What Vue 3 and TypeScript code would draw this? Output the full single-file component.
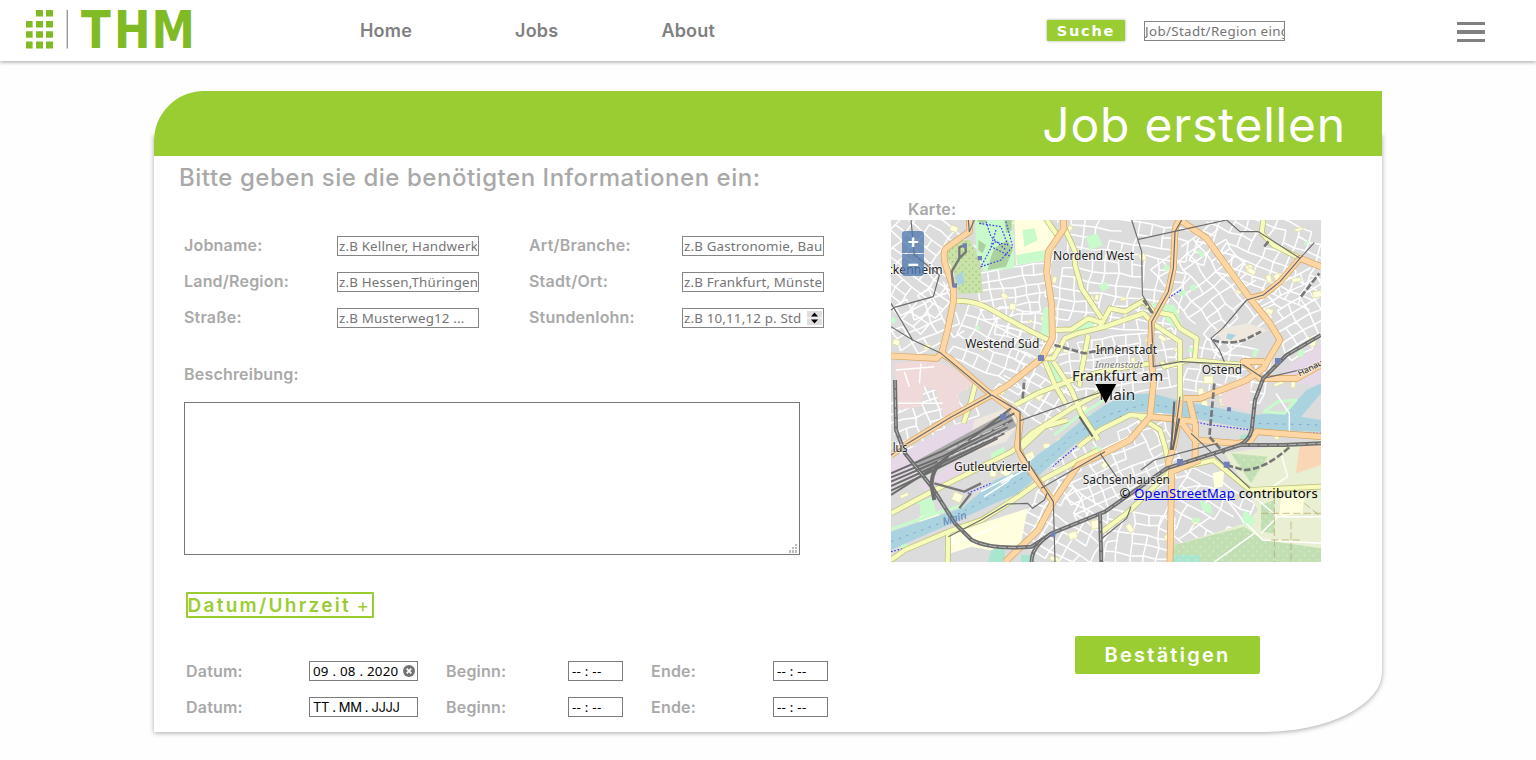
<script setup lang="ts">
import { ref } from 'vue'

interface Field {
  label: string
  placeholder: string
  numeric?: boolean
}

interface Zone {
  x: number
  y: number
  w: number
  h: number
  angle: number
  step: number
}

const navigation = ['Home', 'Jobs', 'About']

const fields: Field[] = [
  { label: 'Jobname:', placeholder: 'z.B Kellner, Handwerker' },
  { label: 'Art/Branche:', placeholder: 'z.B Gastronomie, Baugewerbe' },
  { label: 'Land/Region:', placeholder: 'z.B Hessen,Thüringen...' },
  { label: 'Stadt/Ort:', placeholder: 'z.B Frankfurt, Münster' },
  { label: 'Straße:', placeholder: 'z.B Musterweg12 ...' },
  { label: 'Stundenlohn:', placeholder: 'z.B 10,11,12 p. Std', numeric: true },
]

const dates = ref([
  { value: '09 . 08 . 2020', filled: true },
  { value: 'TT . MM . JJJJ', filled: false },
])

// Side streets: one loose lattice per district.
let seed = 71
function random(): number {
  seed = (seed * 16807) % 2147483647
  return seed / 2147483647
}

function lattice(z: Zone): string {
  const cols = Math.ceil(z.w / z.step)
  const rows = Math.ceil((z.h / z.step) * 1.25)
  const a = (z.angle * Math.PI) / 180
  const pts: string[][] = []
  for (let r = 0; r <= rows; r++) {
    const line: string[] = []
    for (let c = 0; c <= cols; c++) {
      const u = c * z.step - z.w / 2 + (random() - 0.5) * z.step * 0.3
      const v = r * z.step * 0.8 - z.h / 2 + (random() - 0.5) * z.step * 0.25
      const x = z.x + z.w / 2 + u * Math.cos(a) - v * Math.sin(a)
      const y = z.y + z.h / 2 + u * Math.sin(a) + v * Math.cos(a)
      line.push(`${x.toFixed(0)} ${y.toFixed(0)}`)
    }
    pts.push(line)
  }
  let d = ''
  for (let r = 0; r <= rows; r++) {
    for (let c = 0; c <= cols; c++) {
      if (c < cols && random() > 0.14) d += `M${pts[r][c]}L${pts[r][c + 1]}`
      if (r < rows && random() > 0.2) d += `M${pts[r][c]}L${pts[r + 1][c]}`
    }
  }
  return d
}

const zones: Zone[] = [
  { x: -40, y: -20, w: 230, h: 290, angle: 38, step: 38 },
  { x: 0, y: 230, w: 170, h: 160, angle: -25, step: 40 },
  { x: 200, y: 290, w: 220, h: 150, angle: 24, step: 42 },
  { x: 265, y: 145, w: 205, h: 140, angle: -9, step: 35 },
  { x: 320, y: 275, w: 160, h: 80, angle: 10, step: 36 },
  { x: 480, y: 0, w: 370, h: 310, angle: 8, step: 40 },
  { x: 860, y: 50, w: 210, h: 320, angle: -38, step: 38 },
  { x: 930, y: -20, w: 360, h: 190, angle: 22, step: 39 },
  { x: 1130, y: 180, w: 180, h: 190, angle: -30, step: 38 },
  { x: 500, y: 350, w: 360, h: 160, angle: -8, step: 36 },
  { x: 330, y: 440, w: 210, h: 140, angle: 33, step: 36 },
  { x: 0, y: 520, w: 220, h: 130, angle: -18, step: 36 },
  { x: 890, y: 370, w: 230, h: 140, angle: 12, step: 40 },
  { x: 500, y: 650, w: 330, h: 180, angle: -24, step: 36 },
  { x: 400, y: 810, w: 240, h: 220, angle: 32, step: 40 },
  { x: 645, y: 880, w: 180, h: 160, angle: 8, step: 39 },
  { x: 845, y: 780, w: 210, h: 190, angle: 30, step: 44 },
]
const streets = zones.map(lattice)

const plots = Array.from({ length: 110 }, () => ({
  x: Math.round(random() * 1280),
  y: Math.round(random() * 1010),
  w: Math.round(9 + random() * 20),
  h: Math.round(8 + random() * 18),
  turn: Math.round(random() * 80 - 40),
  kind: random() > 0.25 ? 'school' : 'lawn',
}))

const woods = 'M850 975L1060 920L1115 960L1290 985V1026H837ZM1020 700L1130 710L1080 790ZM1110 855L1150 840V940L1110 935Z'
const forest = 'M165 100L190 60L240 60L268 130L275 218L205 222L188 160Z'

const areas = [
  { kind: 'forest', d: forest },
  { kind: 'park', d: 'M252 0H365L370 145L278 153L255 80Z' },
  { kind: 'pale', d: 'M370 0H455L505 55L474 120L375 135Z' },
  { kind: 'park', d: 'M395 30L430 25L440 60L400 80ZM375 105L462 90L467 120L378 135ZM585 50L620 40L635 75L596 90Z' },
  { kind: 'park', d: 'M458 265L478 260L480 345L448 350ZM540 325L600 300L610 325L550 345ZM455 425L487 430L515 480L492 500ZM780 250L850 255L880 330L845 320Z' },
  { kind: 'pink', d: 'M10 428L135 420L260 485L190 530L100 500L90 560L15 570ZM995 490L1080 485L1075 575L990 552Z' },
  { kind: 'pink', d: 'M155 505L205 530L205 575L165 600L135 520Z' },
  { kind: 'industry', d: 'M0 720L170 620L350 570L380 610L350 650L0 800ZM80 800L200 720L240 760L125 820Z' },
  { kind: 'industry', d: 'M1150 475L1290 370V500L1180 480ZM1047 690L1120 680L1117 705L1000 725Z' },
  { kind: 'stone', d: 'M250 600L370 555L380 615L345 665L230 700ZM970 330L1070 310L1130 330L1080 360L1000 370Z' },
  { kind: 'park', d: 'M85 845L125 830L135 880L90 900ZM300 700L340 680L345 710L300 725Z' },
  { kind: 'pale', d: 'M180 940L410 865L390 970L320 995L240 980L180 1000ZM85 890L145 875L145 905L85 920Z' },
  { kind: 'meadow', d: 'M1000 700L1290 660V1026H880L850 975L1065 910L1100 870L1065 800Z' },
  { kind: 'wood', d: woods },
  { kind: 'field', d: 'M1225 680L1290 665V735L1215 760Z' },
  { kind: 'pale', d: 'M1170 830L1240 820L1235 880L1165 890ZM965 760L1000 750L995 800L970 805Z' },
  { kind: 'park', d: 'M1060 870L1095 900L1075 925L1050 905ZM925 840L960 855L965 885L935 870Z' },
  { kind: 'sport', d: 'M300 990L342 980L340 1026H292ZM1050 645L1095 640L1085 670L1045 672ZM838 1005H925V1026H840ZM390 1005H430V1026H390Z' },
]

const secondary = [
  'M197 243Q250 238 312 275T482 365',
  'M492 330L542 328L592 295L637 310',
  'M467 0L502 50M517 15L552 95L552 135L572 205L632 295',
  'M452 415H487L522 355L560 340L642 320L757 280L792 315L867 365V540',
  'M627 320L657 265L702 275L757 243L787 275L842 285L867 325L917 355L912 415',
  'M812 425L820 440L897 420L1057 435',
  'M1117 0L1112 40L1147 75L1227 115',
  'M0 880L132 810L362 695L422 640L542 565L642 510',
  'M462 425L492 495L527 555M487 425L542 510L570 580L622 660',
  'M0 1020L42 990L172 935L272 900L382 830L452 780L622 690',
  'M592 345L572 450L565 500M372 555L440 520L542 480L650 450L780 430',
  'M562 680L627 630L717 585L777 590M737 585L807 630L822 680L832 730',
  'M627 940L707 880L842 750L967 720L1077 810L1290 800',
  'M172 935L170 1026M217 610L240 545L255 485M385 690L460 620L530 600',
]

const primary = [
  'M235 0V35L165 85Q155 95 162 130L187 205V245L170 330L152 400L175 415L290 515L372 575Q392 590 387 610L379 680L402 730L487 845L442 930L342 1026',
  'M0 408L137 415L152 400',
  'M517 0L519 25L472 95L467 155L482 255L484 355L452 415L352 495L302 525L182 590L42 675L0 705',
  'M872 0Q855 5 852 35L847 145L832 215L782 305L779 365L787 495L777 590L717 660L627 705L562 735L487 845',
  'M867 0L947 55L997 125L1077 235L1137 310L1167 360L1117 445L1067 480L927 535H877',
  'M1290 140L1227 115L1167 185L1117 225L1077 235',
  'M777 590L857 598L912 605M867 540L862 600L847 680L832 730L842 755L837 1026M895 540L914 620L912 715',
  'M867 602L912 660L1037 670L1077 665L1097 635L1290 650M842 755L927 720',
  'M1290 435L1217 475H1107L1057 425L1120 425',
]

const trams = [
  'M722 0L752 95L754 225L787 280M742 58L1007 0L1047 35H1102L1227 115L1270 68M1227 115L1167 185L1117 225L1067 240L995 325L960 355L985 390L1000 425',
  'M60 0L70 105L145 165L127 230L10 262L0 270M0 320L65 360L150 400L300 525M0 250L30 300L65 360',
  'M872 0L852 35L847 145L832 215L782 305L787 440L870 425L1057 435L1117 475L1290 435',
  'M250 0L235 35L232 0M302 525L387 575V690L487 845L492 1026M387 602L560 540L650 510',
  'M450 805L642 695M172 950L270 900L350 852L410 850L425 865L460 840L468 820',
  'M627 700L690 790M750 750L790 720L920 685L980 670M847 680L867 530M1077 805L900 640',
  'M302 525L182 590L42 675L0 705M627 960L707 895L720 860',
]

const rail = 'M12 480L15 630L42 700L122 800L192 910L242 960Q300 990 422 980L482 940L642 875L827 745L1047 675Q1075 660 1082 630L1092 540L1117 475L1187 405L1290 345'
const yards = [
  'M0 760L150 695L370 580', 'M0 772L160 707L365 600', 'M0 785L150 720L350 622',
  'M0 798L140 735L340 640', 'M0 812L130 750L320 655', 'M0 825L110 755L360 565',
]
</script>

<template>
  <div class="page">
    <header class="topbar">
      <svg class="logo" width="170" height="40" viewBox="25 9 170 40" aria-label="THM">
        <path class="logo-mark" d="M36 10h7v6.6h-7zM46 10h7v6.6h-7zM26 21h6.6v6.6H26zM36 21h7v6.6h-7zM46 21h7v6.6h-7zM26 31.3h6.6v6.5H26zM36 31.3h7v6.5h-7zM46 31.3h7v6.5h-7zM26 41.4h6.6v7H26zM36 41.4h7v7h-7zM46 41.4h7v7h-7z" />
        <path class="logo-rule" d="M67.3 10v38.5" />
        <text class="logo-text" transform="scale(.84 1)" x="96.4 135.6 180.4" y="48.3">THM</text>
      </svg>
      <nav class="nav">
        <a v-for="item in navigation" :key="item">{{ item }}</a>
      </nav>
      <div class="search">
        <button class="search-button" type="button">Suche</button>
        <input class="search-input" placeholder="Job/Stadt/Region eingeben" />
      </div>
      <div class="burger"><i></i><i></i><i></i></div>
    </header>

    <main class="card">
      <h1 class="card-title">Job erstellen</h1>
      <div class="card-body">
        <section class="form">
          <h2>Bitte geben sie die benötigten Informationen ein:</h2>
          <div class="fields">
            <template v-for="field in fields" :key="field.label">
              <label>{{ field.label }}</label>
              <div class="control">
                <input :placeholder="field.placeholder" />
                <svg v-if="field.numeric" class="spinner" width="15" height="14" viewBox="0 0 15 14">
                  <rect width="15" height="14" fill="#dedede" />
                  <path d="M0 7h15" stroke="#fff" />
                  <path d="M7.5 1.5L11 5.5H4zM7.5 12.5L11 8.5H4z" />
                </svg>
              </div>
            </template>
          </div>
          <label class="description-label">Beschreibung:</label>
          <div class="description">
            <textarea></textarea>
            <svg class="grip" width="10" height="10" viewBox="0 0 10 10">
              <path d="M7 0h2v2H7zM4 3h2v2H4zM7 3h2v2H7zM1 6h2v3H1zM4 6h2v3H4zM7 6h2v3H7z" />
            </svg>
          </div>
          <button class="add-date" type="button">Datum/Uhrzeit <span>+</span></button>
          <div class="dates">
            <template v-for="date in dates" :key="date.value">
              <label>Datum:</label>
              <div class="box date-box">
                <span :class="{ hint: !date.filled }">{{ date.value }}</span>
                <svg v-if="date.filled" width="12" height="12" viewBox="0 0 12 12">
                  <circle cx="6" cy="6" r="6" fill="#737373" />
                  <path d="M3.7 3.7l4.6 4.6M8.3 3.7L3.7 8.3" stroke="#fff" stroke-width="1.7" />
                </svg>
              </div>
              <label>Beginn:</label>
              <div class="box">-- : --</div>
              <label>Ende:</label>
              <div class="box">-- : --</div>
            </template>
          </div>
        </section>

        <section class="side">
          <label class="map-label">Karte:</label>
          <div class="map">
            <svg class="map-canvas" width="430" height="342" viewBox="0 0 1290 1026">
              <defs>
                <pattern id="trees" width="20" height="20" patternUnits="userSpaceOnUse">
                  <circle cx="5" cy="5" r="1.8" fill="#7fae6a" />
                  <circle cx="15" cy="15" r="1.8" fill="#7fae6a" />
                </pattern>
                <pattern id="grove" width="26" height="26" patternUnits="userSpaceOnUse">
                  <circle cx="6" cy="6" r="2.2" fill="#e4f3dc" />
                  <circle cx="19" cy="19" r="2.2" fill="#e4f3dc" />
                </pattern>
              </defs>
              <rect width="1290" height="1026" fill="#dcdcdc" />
              <path v-for="(d, i) in streets" :key="'s' + i" :d="d" class="street" />
              <rect
                v-for="(p, i) in plots" :key="'p' + i" :class="p.kind" :x="p.x" :y="p.y" :width="p.w" :height="p.h"
                :transform="`rotate(${p.turn} ${p.x} ${p.y})`"
              />
              <path v-for="(a, i) in areas" :key="'a' + i" :d="a.d" :class="a.kind" />
              <path :d="forest" fill="url(#trees)" />
              <path :d="woods" fill="url(#grove)" />
              <path class="copse" d="M262 60L285 75L275 100L262 90ZM310 85L350 60L365 90L345 140L290 150L300 110ZM340 0H362V30L345 40ZM258 0H290L270 15Z" />
              <path class="street" d="M15 450L130 440M40 455L55 500M90 430L85 490M15 550H155M100 500L120 545M1065 810L1160 890L1290 890M1065 910L1115 960L1290 970M1090 940L970 1026M1160 890L1110 940M1170 700L1190 770L1130 810M845 820Q950 770 1000 830T1060 910M200 870L185 970L320 920M960 890L860 960" />
              <path class="track" d="M1150 830V1026M1200 905V1026M1110 880H1290M1140 960H1230M1240 850L1290 890" />
              <path class="footway" d="M265 10L330 20L350 75L310 65L270 140L330 120L365 80L345 5M315 30L300 80L360 110M285 5L300 50L345 90M230 820L300 790M870 210L830 235" />
              <path class="river" d="M0 935L132 890L212 865L312 780L382 755L432 710L502 660L562 610L642 555L707 525L782 520L857 540L987 565L1087 585L1187 575L1247 510L1290 490V520L1230 590L1290 600V635L1097 630L957 605L827 580L727 575L627 620L542 680L462 750L382 820L312 850L182 910L0 990Z" />
              <path class="bank" d="M0 928L135 880L220 855M1120 575L1160 545L1215 540L1180 580ZM490 645L560 590L640 540" />
              <path class="street" d="M270 815L365 765L350 785L280 830M1155 520L1195 580V640M330 790L400 750" />
              <path class="ferry" d="M0 965L160 905L320 820L450 740L540 650L650 585L770 550L960 585L1100 610L1290 615" />
              <path class="footway" d="M0 995L60 980M485 740L590 650L690 590M800 585L960 615L1120 635L1290 640" />
              <path class="river" d="M195 165L215 155L220 190L195 195ZM1010 340L1035 345L1020 360L1005 355Z" />

              <path v-for="(d, i) in secondary" :key="'yc' + i" :d="d" class="secondary-edge" />
              <path v-for="(d, i) in secondary" :key="'y' + i" :d="d" class="secondary" />
              <path v-for="(d, i) in primary" :key="'oc' + i" :d="d" class="primary-edge" />
              <path v-for="(d, i) in primary" :key="'o' + i" :d="d" class="primary" />
              <path v-for="(d, i) in trams" :key="'t' + i" :d="d" class="tram" />

              <path class="yard" d="M80 750L365 595" />
              <path v-for="(d, i) in yards" :key="'r' + i" :d="d" class="yard-track" />
              <path class="yard-gaps" d="M170 690L350 610M190 702L350 630M140 725L330 642" />
              <path class="rail" :d="rail" />
              <path class="rail-inner" :d="rail" />
              <path class="rail" d="M1047 675L1180 675L1290 670M422 1026Q420 980 482 940M627 880L631 1026M122 800Q120 740 170 715M122 800L130 840" />
              <path class="rail-inner" d="M1047 675L1180 675L1290 670M422 1026Q420 980 482 940M627 880L631 1026" />
              <path class="tunnel" d="M1007 735L1057 750Q1120 750 1197 680M970 490L955 650L1000 700M490 375L580 400L680 380M965 360Q1010 375 1060 360L1110 335M395 535L400 480M757 240L785 280M1120 80L1135 60M1230 230L1285 160" />
              <path class="siding" d="M187 200L182 155L205 115L205 82L222 75L225 95L205 115M240 820L205 865M130 790L220 815L270 790" />
              <path class="bridge" d="M565 590L605 650M850 545L840 690M865 595L845 690" />
              <path class="stop" d="M215 70h13v13h-13zM260 108h13v13h-13zM185 190h13v13h-13zM441 405h18v18h-18zM328 582h18v18h-18zM858 717h18v18h-18zM998 725h18v18h-18zM1152 414h18v18h-18zM1008 562h12v12h-12zM480 937h13v13h-13z" />

              <g class="names">
                <text x="486" y="120" textLength="243" lengthAdjust="spacingAndGlyphs">Nordend West</text>
                <text x="-12" y="162" textLength="167" lengthAdjust="spacingAndGlyphs">ckenheim</text>
                <text x="223" y="384" textLength="222" lengthAdjust="spacingAndGlyphs">Westend Süd</text>
                <text x="614" y="402" textLength="184" lengthAdjust="spacingAndGlyphs">Innenstadt</text>
                <text class="italic" x="612" y="443" textLength="143" lengthAdjust="spacingAndGlyphs">Innenstadt</text>
                <text x="932" y="462" textLength="121" lengthAdjust="spacingAndGlyphs">Ostend</text>
                <text class="city" x="543" y="482" textLength="274" lengthAdjust="spacingAndGlyphs">Frankfurt am</text>
                <text class="city" x="625" y="540" textLength="108" lengthAdjust="spacingAndGlyphs">Main</text>
                <text x="5" y="696" textLength="45" lengthAdjust="spacingAndGlyphs">lus</text>
                <text x="189" y="752" textLength="230" lengthAdjust="spacingAndGlyphs">Gutleutviertel</text>
                <text x="575" y="791" textLength="262" lengthAdjust="spacingAndGlyphs">Sachsenhausen</text>
                <text class="water-name" x="158" y="917" transform="rotate(-17 158 917)">Main</text>
                <text class="road-name" x="1226" y="470" transform="rotate(-27 1226 470)">Hanauer</text>
              </g>
              <path d="M613 492H676L644 550Z" />
            </svg>
            <div class="zoom"><button type="button">+</button><button type="button">−</button></div>
            <p class="credit">© <a>OpenStreetMap</a> contributors</p>
          </div>
          <button class="submit" type="button">Bestätigen</button>
        </section>
      </div>
    </main>
  </div>
</template>

<style>
body {
  margin: 0;
  background: #fefefe;
}
</style>

<style scoped>
.page {
  height: 760px;
  overflow: hidden;
  font-family: Inter, 'Noto Sans', sans-serif;
  color: #a9a9a9;
  background: #fefefe;
}
* { box-sizing: border-box; }
button, input, textarea { font-family: inherit; margin: 0; border-radius: 0; }
label { font-size: 16px; font-weight: 600; line-height: 21px; letter-spacing: .2px; white-space: nowrap; }

.topbar {
  height: 61px;
  display: grid;
  grid-template-columns: 335px 687px 409px 1fr;
  padding-left: 25px;
  background: #fff;
  box-shadow: 0 1px 4px rgba(0, 0, 0, .38);
}
.logo { display: block; margin-top: 9px; overflow: visible; }
.logo-mark, .logo-text { fill: #80ba24; }
.logo-text { font: bold 52px 'DejaVu Sans', sans-serif; }
.logo-rule { stroke: #999; stroke-width: 1.4; }
.nav { display: flex; gap: 103px; color: gray; font-size: 18px; font-weight: 600; line-height: 61px; letter-spacing: .2px; }
.search { display: flex; align-items: flex-start; gap: 19px; padding-top: 20px; }
.search-button {
  width: 78px; height: 21px; padding: 0; border: 0; border-radius: 1px;
  color: #fff; background: #9acd32; font: bold 14.5px/22px 'DejaVu Sans', sans-serif; letter-spacing: 1.8px;
  box-shadow: 0 0 3px rgba(0, 0, 0, .35);
}
input {
  width: 142px; height: 20px; padding: 0 1px 1px; border: 1px solid #858585; background: #fff;
  font-family: 'Noto Sans', sans-serif; font-size: 13.33px; letter-spacing: .18px; line-height: 17px; outline: 0;
}
input::placeholder { color: #757575; opacity: 1; }
.search-input { width: 141px; margin-top: 1px; padding: 0; letter-spacing: .35px; }
.burger { display: flex; flex-direction: column; gap: 5px; margin: 22px 0 0 1px; }
.burger i { width: 28px; height: 3.4px; background: gray; }

.card {
  width: 1228px;
  height: 598px;
  margin: 73px auto 0;
  background: #fff;
  border-radius: 0 0 120px 0 / 0 0 60px 0;
  box-shadow: 0 1px 5px rgba(0, 0, 0, .35);
  display: flow-root;
}
.card-title {
  position: relative;
  height: 65px;
  margin: -43px 0 0;
  padding-right: 36px;
  border-radius: 50px 0 0 0;
  background: #9acd32;
  color: #fff;
  font-size: 48px;
  font-weight: 400;
  line-height: 68px;
  letter-spacing: .8px;
  text-align: right;
}
.card-body { display: grid; grid-template-columns: 737px 430px; }
.form { padding-left: 30px; }
h2 { margin: 6px 0 0 -5px; height: 30px; font-size: 24px; font-weight: 500; line-height: 31px; letter-spacing: .53px; white-space: nowrap; }
.fields {
  display: grid; grid-template-columns: 153px 192px 153px 142px; grid-auto-rows: 20px;
  row-gap: 16px; margin-top: 44px;
}
.fields label { line-height: 19px; }
.control { position: relative; height: 20px; width: 142px; }
.control input { display: block; }
.spinner { position: absolute; top: 3px; right: 2px; }
.description-label { display: block; margin: 36px 0 18px; height: 19px; }
.description { position: relative; width: 616px; height: 153px; margin-top: 19px; }
textarea { display: block; width: 100%; height: 100%; border: 1px solid #777; background: #fff; resize: none; outline: 0; }
.grip { position: absolute; right: 2px; bottom: 1px; fill: #bdbdbd; }
.add-date {
  display: block; width: 188px; height: 26px; margin: 37px 0 0 1.5px; padding: 0;
  border: 2px solid #9acd32; border-radius: 1px; background: #fff; color: #9acd32;
  font-size: 19px; font-weight: 600; line-height: 23px; letter-spacing: 2.28px; text-align: left; white-space: nowrap;
}
.add-date span { margin-left: -1.5px; font-weight: 400; }
.dates {
  display: grid; grid-template-columns: 123px 137px 122px 83px 122px 55px; grid-auto-rows: 20px;
  row-gap: 16px; margin: 43px 0 0 2px;
}
.box {
  width: 55px; height: 20px; padding: 0 3px; border: 1px solid #7c7c7c; background: #fff; color: #000;
  font: 13.33px/18px 'Noto Sans', sans-serif; letter-spacing: .25px; white-space: pre;
}
.date-box { display: flex; align-items: center; justify-content: space-between; width: 109px; padding: 0 2px 0 3px; }
.hint { font-family: Inter, sans-serif; font-size: 13px; letter-spacing: -.4px; }

.side { padding-top: 42px; }
.map-label { display: block; margin-left: 17px; height: 22px; line-height: 22px; }
.map { position: relative; width: 430px; height: 342px; overflow: hidden; }
.map-canvas { display: block; }
.zoom { position: absolute; left: 11px; top: 11px; display: grid; gap: 1px; }
.zoom button {
  width: 22px; height: 22px; padding: 0; border: 0; background: rgba(80, 121, 174, .78); color: #fff;
  font: bold 19px/20px 'Liberation Sans', sans-serif;
}
.zoom button:first-child { border-radius: 3px 3px 0 0; }
.zoom button:last-child { border-radius: 0 0 3px 3px; }
.credit {
  position: absolute; right: 3px; top: 264px; margin: 0; color: #000;
  font: 13px/18px 'Noto Sans', sans-serif; letter-spacing: .3px; white-space: nowrap;
}
.credit a { color: #0000ee; text-decoration: underline; }
.submit {
  display: block; width: 185px; height: 38px; margin: 74px 0 0 184px; padding: 0; border: 0; border-radius: 2px;
  background: #9acd32; color: #fff; font-size: 20px; font-weight: 600; line-height: 38px; letter-spacing: 2.25px;
}

.map-canvas path { stroke-linejoin: round; }
.street, .track, .footway, .ferry, .secondary, .secondary-edge, .primary, .primary-edge, .tram, .yard, .yard-track,
.yard-gaps, .rail, .rail-inner, .tunnel, .siding, .bridge { fill: none; }
.street { stroke: #fff; stroke-width: 4.5; }
.track { stroke: #b59f5c; stroke-width: 2; stroke-dasharray: 22 10; }
.footway { stroke: #3535ee; stroke-width: 3.5; stroke-dasharray: 5 5; }
.ferry { stroke: #7d9fce; stroke-width: 2.5; stroke-dasharray: 8 16; }
.school, .pale { fill: #ffffe0; }
.school { stroke: #dfdc9b; stroke-width: 2; }
.lawn, .park { fill: #c8facc; }
.forest { fill: #c9e2a8; }
.copse { fill: #add19e; }
.wood { fill: #c2dfb4; }
.pink { fill: #f0d9d9; }
.industry { fill: #e7d8e7; }
.stone { fill: #eee8df; }
.meadow { fill: #e9efd2; }
.field { fill: #f8d6b6; }
.sport { fill: #a8e6cf; }
.river { fill: #aad3df; }
.bank { fill: none; stroke: #c8facc; stroke-width: 9; }
.secondary-edge { stroke: #b9ba72; stroke-width: 17; }
.secondary { stroke: #f6fabb; stroke-width: 13; }
.primary-edge { stroke: #d7a45c; stroke-width: 20; }
.primary { stroke: #fcd6a4; stroke-width: 16; }
.tram { stroke: #6b6b6b; stroke-width: 3.5; }
.yard { stroke: #aaa; stroke-width: 52; }
.yard-track { stroke: #6c6c6c; stroke-width: 6; }
.yard-gaps { stroke: #ddd; stroke-width: 3; stroke-dasharray: 30 8; }
.rail { stroke: #6d6d6d; stroke-width: 12; }
.rail-inner { stroke: #c8c8c8; stroke-width: 2.5; stroke-dasharray: 24 5; }
.tunnel { stroke: #777; stroke-width: 8; stroke-dasharray: 20 7; }
.siding { stroke: #777; stroke-width: 7; }
.bridge { stroke: #666; stroke-width: 6; }
.stop { fill: #7181b5; }
.names { font-family: 'Noto Sans', sans-serif; font-size: 37px; fill: #222; stroke: rgba(255, 255, 255, .65); stroke-width: 5; paint-order: stroke; }
.names .city { font-size: 45px; }
.names .italic { font-size: 29px; font-style: italic; fill: #777; }
.names .water-name { font-size: 33px; font-style: italic; fill: #6483b5; stroke: none; }
.names .road-name { font-size: 26px; }
</style>
